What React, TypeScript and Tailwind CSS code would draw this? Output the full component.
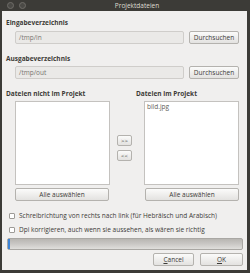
import React from 'react';

function Btn({ children, className = '' }: { children: React.ReactNode; className?: string }) {
  return (
    <div
      className={`flex items-center justify-center rounded-[2px] border border-[#b4b2ae] bg-gradient-to-b from-[#fbfbfa] to-[#e3e2e0] text-[#3c3b37] ${className}`}
    >
      {children}
    </div>
  );
}

function Label({ children }: { children: React.ReactNode }) {
  return <div className="h-[9px] leading-[9px] font-bold text-[#3c3b37] whitespace-nowrap">{children}</div>;
}

function PathRow({ value }: { value: string }) {
  return (
    <div className="flex h-[13px] items-stretch pl-[9px] pr-[8px] gap-[5px]">
      <div className="flex-1 flex items-center rounded-[2px] border border-[#cfcdca] bg-[#eae9e7] pl-[3px] text-[#77756f]">
        {value}
      </div>
      <Btn className="w-[50px]">Durchsuchen</Btn>
    </div>
  );
}

function Check({ text }: { text: string }) {
  return (
    <div className="flex h-[9px] items-center gap-[4px] pl-[3px] whitespace-nowrap text-[#3c3b37]">
      <div className="w-[6px] h-[6px] rounded-[1px] border border-[#9d9b97] bg-white" />
      <span className="leading-[9px]">{text}</span>
    </div>
  );
}

export default function App() {
  return (
    <div className="w-[250px] h-[273px] bg-[#3c3b37] flex flex-col font-['Open_Sans','Noto_Sans',sans-serif] text-[6.5px] overflow-hidden">
      {/* Title bar */}
      <div className="relative h-[11px] flex items-center justify-center pl-[24px] text-[#dfdbd2]">
        <div className="absolute left-[7px] top-[2px] w-[7px] h-[7px] rounded-full border border-[#6f6d68] bg-[#4b4a46]" />
        <div className="absolute left-[19px] top-[2px] w-[7px] h-[7px] rounded-full border border-[#6f6d68] bg-[#4b4a46]" />
        <span className="leading-[11px]">Projektdateien</span>
      </div>

      {/* Body */}
      <div className="flex-1 ml-[2px] mr-[3px] mb-[3px] bg-[#f0efee] pl-[4px] pt-[7px] flex flex-col">
        <Label>Eingabeverzeichnis</Label>
        <div className="mt-[4px]">
          <PathRow value="/tmp/in" />
        </div>

        <div className="mt-[10px]">
          <Label>Ausgabeverzeichnis</Label>
        </div>
        <div className="mt-[3px]">
          <PathRow value="/tmp/out" />
        </div>

        <div className="mt-[10px] flex">
          <div className="w-[104px] flex flex-col">
            <Label>Dateien nicht im Projekt</Label>
            <div className="mt-[3px] ml-[9px] w-[95px] h-[84px] border border-[#c4c2bf] bg-white" />
            <Btn className="mt-[3px] ml-[9px] w-[94px] h-[13px]">Alle auswählen</Btn>
          </div>
          <div className="w-[26px] flex flex-col pl-[7px] pt-[46px] gap-[4px]">
            <Btn className="w-[15px] h-[11px] text-[6px] leading-none">&gt;&gt;</Btn>
            <Btn className="w-[15px] h-[11px] text-[6px] leading-none">&lt;&lt;</Btn>
          </div>
          <div className="flex flex-col">
            <Label>Dateien im Projekt</Label>
            <div className="mt-[3px] ml-[8px] w-[95px] h-[84px] border border-[#c4c2bf] bg-white pl-[2px] text-[#5e5c58] leading-[9px]">
              bild.jpg
            </div>
            <Btn className="mt-[3px] ml-[9px] w-[94px] h-[13px]">Alle auswählen</Btn>
          </div>
        </div>

        <div className="mt-[10px]">
          <Check text="Schreibrichtung von rechts nach link (für Hebräisch und Arabisch)" />
        </div>
        <div className="mt-[5px]">
          <Check text="Dpi korrigieren, auch wenn sie aussehen, als wären sie richtig" />
        </div>

        {/* Progress bar */}
        <div className="mt-[4px] ml-[1px] w-[236px] h-[12px] rounded-[2px] border border-[#a9a7a3] bg-gradient-to-b from-[#b8b6b2] via-[#cac8c5] to-[#e0dfdc] flex">
          <div className="w-[2px] h-full bg-[#3d84d6]" />
        </div>

        <div className="mt-[3px] flex justify-end gap-[6px] pr-[4px]">
          <Btn className="w-[41px] h-[13px]">
            <span>
              <span className="underline">C</span>ancel
            </span>
          </Btn>
          <Btn className="w-[43px] h-[13px]">
            <span>
              <span className="underline">O</span>K
            </span>
          </Btn>
        </div>
      </div>
    </div>
  );
}
